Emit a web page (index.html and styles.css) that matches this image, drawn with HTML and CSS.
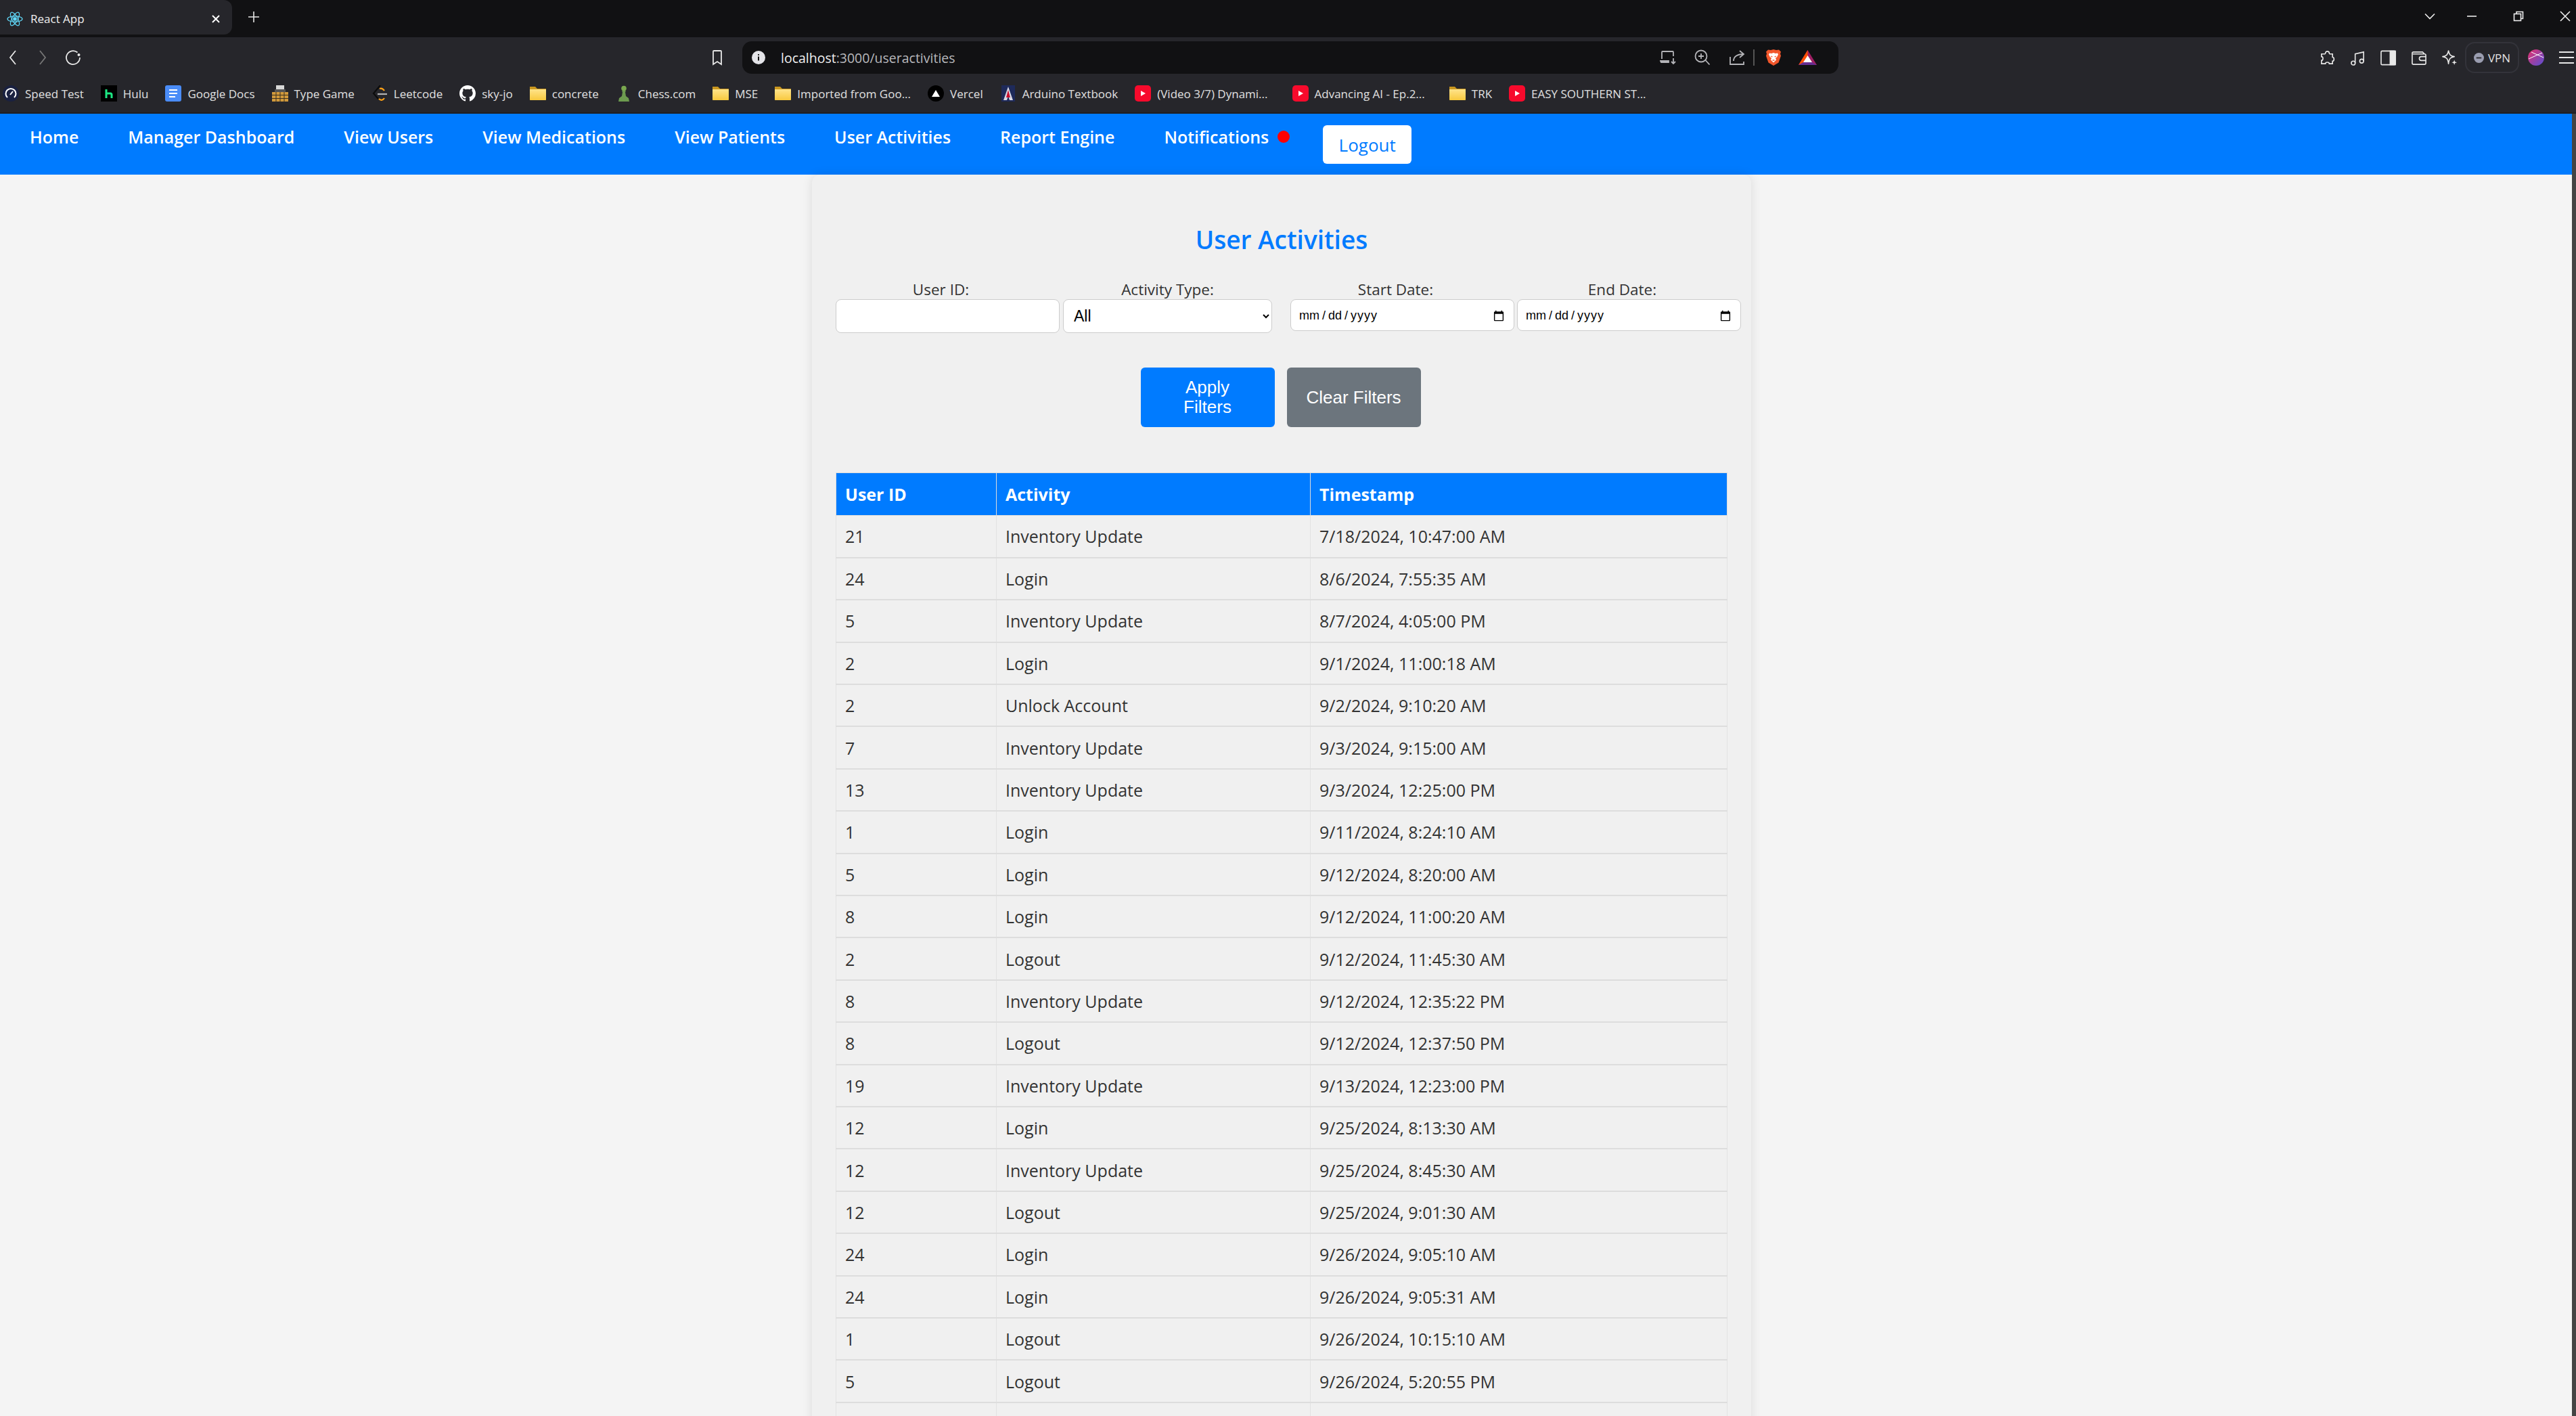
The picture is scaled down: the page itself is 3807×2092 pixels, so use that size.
FILE: index.html
```html
<!DOCTYPE html>
<html lang="en">
<head>
    <meta charset="UTF-8">
    <title>React App</title>
    <link rel="stylesheet" href="styles.css">
</head>
<body>
    <svg class="defs">
        <defs>
            <linearGradient id="fold" x1="0" y1="0" x2="0" y2="1"><stop offset="0" stop-color="#ffe38a"/><stop offset="1" stop-color="#f8c93e"/></linearGradient>
            <g id="folder-shape"><path d="M0 2h8l3 3h13v16a1 1 0 0 1-1 1H1a1 1 0 0 1-1-1z" fill="#c9971f"/><path d="M0 6h24v15a1 1 0 0 1-1 1H1a1 1 0 0 1-1-1z" fill="url(#fold)"/></g>
            <g id="yt-shape"><rect width="24" height="24" rx="5" fill="#f70a2c"/><path d="M9 8l7 4-7 4z" fill="#fff"/></g>
        </defs>
    </svg>

    <div class="tabstrip">
        <div class="tab">
            <svg class="ico" viewBox="0 0 24 24" fill="none" stroke="#61dafb" stroke-width="1.2"><circle cx="12" cy="12" r="2.200" fill="#61dafb"/><ellipse cx="12" cy="12" rx="11" ry="4.200"/><ellipse cx="12" cy="12" rx="11" ry="4.200" transform="rotate(60 12 12)"/><ellipse cx="12" cy="12" rx="11" ry="4.200" transform="rotate(120 12 12)"/></svg>
            <span class="tab-title">React App</span>
            <svg class="tab-x" viewBox="0 0 12 12" stroke="#fff" stroke-width="2"><path d="M1 1l10 10M11 1L1 11"/></svg>
        </div>
        <svg class="new-tab" viewBox="0 0 16 16" stroke="#e8e8e8" stroke-width="1.600"><path d="M8 0v16M0 8h16"/></svg>
        <div class="win-controls">
            <svg class="win-chev" viewBox="0 0 16 16" fill="none" stroke="#eee" stroke-width="1.600"><path d="M1 4.500l7 7 7-7"/></svg>
            <svg viewBox="0 0 16 16" stroke="#eee" stroke-width="1.600"><path d="M1 8h14"/></svg>
            <svg viewBox="0 0 16 16" fill="none" stroke="#eee" stroke-width="1.600"><rect x="1.500" y="4.500" width="10" height="10"/><path d="M5 4V1.500h9.500V11.500H12"/></svg>
            <svg viewBox="0 0 16 16" stroke="#eee" stroke-width="1.600"><path d="M1 1l14 14M15 1L1 15"/></svg>
        </div>
    </div>

    <div class="toolbar">
        <svg class="tool tool-back" viewBox="0 0 16 24" fill="none" stroke="#e8e8e8" stroke-width="1.800"><path d="M11 2L3 12l8 10"/></svg>
        <svg class="tool tool-fwd" viewBox="0 0 16 24" fill="none" stroke="#777" stroke-width="1.800"><path d="M5 2l8 10-8 10"/></svg>
        <svg class="tool tool-reload" viewBox="0 0 24 24" fill="none" stroke="#e8e8e8" stroke-width="1.800"><path d="M18.500 4.500A10 10 0 1 0 22 12"/><circle cx="20.500" cy="8" r="2" fill="#e8e8e8" stroke="none"/></svg>
        <svg class="tool tool-mark" viewBox="0 0 16 24" fill="none" stroke="#e8e8e8" stroke-width="1.800"><path d="M2 3a1 1 0 0 1 1-1h10a1 1 0 0 1 1 1v19l-6-4-6 4z"/></svg>
        <div class="urlbar">
            <svg class="info" viewBox="0 0 20 20"><circle cx="10" cy="10" r="10" fill="#e4e4e8"/><path d="M10 8.500v6M10 5v1.800" stroke="#111" stroke-width="2"/></svg>
            <span class="url"><span class="url-host">localhost</span>:3000/useractivities</span>
            <div class="url-tools">
                <svg viewBox="0 0 24 24" fill="none" stroke="#b4b4b8" stroke-width="1.800"><path d="M3 14V4a1 1 0 0 1 1-1h15a1 1 0 0 1 1 1v6M1 17h12v2H2z"/><path d="M20 13v8m-3-3l3 3 3-3"/></svg>
                <svg viewBox="0 0 24 24" fill="none" stroke="#b4b4b8" stroke-width="1.800"><circle cx="10" cy="10" r="8.500"/><path d="M16.500 16l6 6.500M10 6v8M6 10h8"/></svg>
                <svg viewBox="0 0 24 24" fill="none" stroke="#b4b4b8" stroke-width="1.800"><path d="M2 11v11h20v-4M7 17c0-6 5-10 14-10M16 2l6 5-6 5"/></svg>
            </div>
            <span class="url-sep"></span>
            <svg class="shield" viewBox="0 0 24 24"><path d="M12 0l4 1 4-.5 3 3-1 3 1 3-3.500 10L12 24l-7.500-4.500L1 9.500l1-3-1-3 3-3 4 .500z" fill="#f1562b"/><path d="M12 5l3 1 3-.5 1 2-2 4-2 1 1 3-4 4-4-4 1-3-2-1-2-4 1-2 3 .5z" fill="#fff"/><path d="M8 10l2.500 1M16 10l-2.500 1M10.500 16h3" stroke="#f1562b" stroke-width="1.300"/></svg>
            <svg class="triangle" viewBox="0 0 27 24"><path d="M13.500 1L27 23H0z" fill="#9e1f63"/><path d="M13.500 1v10L7 20 0 23z" fill="#ff5000"/><path d="M0 23l7-4h13l7 4z" fill="#662d91"/><path d="M13.500 9l6.500 10H7z" fill="#fff"/></svg>
        </div>
        <div class="ext-tools">
            <svg viewBox="0 0 24 24" fill="none" stroke="#e8e8e8" stroke-width="1.700"><path d="M9 5c0-4 6-4 6 0 0 1 0 1 1 1h4v5c3 0 3 6 0 6v4h-5c0-3-6-3-6 0H3v-5c3 0 3-6 0-6V6h5c1 0 1 0 1-1z"/></svg>
            <svg viewBox="0 0 24 24" fill="none" stroke="#e8e8e8" stroke-width="1.700"><circle cx="5" cy="20" r="3"/><circle cx="18" cy="17" r="3"/><path d="M8 20V6l13-3v14"/></svg>
            <svg viewBox="0 0 24 24" fill="none" stroke="#e8e8e8" stroke-width="1.700"><rect x="1" y="1.500" width="22" height="21" rx="1.500"/><rect x="15" y="1.500" width="8" height="21" fill="#e8e8e8"/></svg>
            <svg viewBox="0 0 24 24" fill="none" stroke="#e8e8e8" stroke-width="1.700"><path d="M2 5a2 2 0 0 1 2-2h14l3 3M2 5v15a2 2 0 0 0 2 2h17a2 2 0 0 0 2-2V8a2 2 0 0 0-2-2H3"/><path d="M23 10h-7a3 3 0 0 0 0 6h7"/></svg>
            <svg viewBox="0 0 24 24" fill="none" stroke="#e8e8e8" stroke-width="1.700"><path d="M11 1c1 6 3 8 9 9-6 1-8 3-9 11-1-8-3-10-9-11 6-1 8-3 9-9z" stroke-linejoin="round"/><path d="M20 15l1 3 3 1-3 1-1 3-1-3-3-1 3-1z" fill="#e8e8e8" stroke="none"/></svg>
        </div>
        <div class="vpn">
            <svg viewBox="0 0 16 16"><circle cx="8" cy="8" r="8" fill="#9a9db0"/><path d="M4 8h8" stroke="#2a2a2f" stroke-width="2"/></svg>
            <span>VPN</span>
        </div>
        <svg class="profile" viewBox="0 0 24 24"><defs><linearGradient id="pf" x1="0" y1="0" x2="1" y2="1"><stop offset="0" stop-color="#e8306a"/><stop offset="1" stop-color="#5550d8"/></linearGradient></defs><circle cx="12" cy="12" r="12" fill="url(#pf)"/><path d="M1 14L21 5M5 4l18 8" stroke="#fff" stroke-width="1" fill="none"/></svg>
        <svg class="menu" viewBox="0 0 22 20" stroke="#e8e8e8" stroke-width="2"><path d="M0 2h22M0 10h22M0 18h22"/></svg>
    </div>

    <div class="bookmarks">
        <span class="bm"><svg viewBox="0 0 24 24" fill="none"><circle cx="12" cy="12" r="12" fill="#1a2140"/><path d="M7 18a7.500 7.500 0 1 1 10 0" stroke="#fff" stroke-width="2"/><path d="M11 14l4-5" stroke="#fff" stroke-width="2"/></svg>Speed Test</span>
        <span class="bm"><svg viewBox="0 0 24 24"><rect width="24" height="24" fill="#000"/><path d="M8 6v13M8 12h6a2 2 0 0 1 2 2v5" stroke="#1ce783" stroke-width="3" fill="none"/></svg>Hulu</span>
        <span class="bm"><svg viewBox="0 0 24 24"><rect width="24" height="24" rx="3" fill="#4a8cf7"/><path d="M6 7h12M6 12h12M6 17h9" stroke="#fff" stroke-width="2.200"/></svg>Google Docs</span>
        <span class="bm"><svg viewBox="0 0 24 24"><rect x="6" width="12" height="10" fill="#d8d8d8"/><rect x="4" y="6" width="16" height="4" fill="#555"/><rect y="10" width="24" height="14" fill="#d29a3c"/><path d="M0 14.500h24M0 19.500h24M6 10v14M12 10v14M18 10v14" stroke="#3a3020"/></svg>Type Game</span>
        <span class="bm"><svg viewBox="0 0 24 24" fill="none" stroke-width="2.200"><path d="M13 0L3 12l7 8" stroke="#0c0c0c"/><path d="M11 20c3 3 6 2 8-1M12 5c3-1 5 0 7 3" stroke="#ffa116"/><path d="M9 13h14" stroke="#b3b3b3"/></svg>Leetcode</span>
        <span class="bm"><svg viewBox="0 0 16 16"><path fill="#fff" d="M8 0C3.580 0 0 3.580 0 8c0 3.540 2.290 6.530 5.470 7.590.4.070.55-.17.55-.38 0-.19-.01-.82-.01-1.490-2.010.37-2.530-.49-2.690-.94-.09-.23-.48-.94-.82-1.130-.28-.15-.68-.52-.01-.53.63-.01 1.080.58 1.230.82.72 1.210 1.870.87 2.330.66.07-.52.28-.87.51-1.070-1.780-.2-3.640-.89-3.640-3.950 0-.87.31-1.590.82-2.150-.08-.2-.36-1.020.08-2.120 0 0 .67-.21 2.200.82.64-.18 1.320-.27 2-.27.68 0 1.360.09 2 .27 1.530-1.040 2.200-.82 2.200-.82.44 1.100.16 1.920.08 2.120.51.56.82 1.270.82 2.150 0 3.070-1.870 3.750-3.650 3.950.29.25.54.73.54 1.480 0 1.070-.01 1.930-.01 2.200 0 .21.15.46.55.38A8.013 8.013 0 0016 8c0-4.420-3.580-8-8-8z"/></svg>sky-jo</span>
        <span class="bm"><svg viewBox="0 0 24 24"><use href="#folder-shape"/></svg>concrete</span>
        <span class="bm"><svg viewBox="0 0 24 24"><circle cx="12" cy="4.500" r="3.800" fill="#7aa84f"/><path d="M9 8h6l-1 2 1 6 4 3 1 5H4l1-5 4-3 1-6z" fill="#6d9b4f"/></svg>Chess.com</span>
        <span class="bm"><svg viewBox="0 0 24 24"><use href="#folder-shape"/></svg>MSE</span>
        <span class="bm"><svg viewBox="0 0 24 24"><use href="#folder-shape"/></svg>Imported from Goo...</span>
        <span class="bm"><svg viewBox="0 0 24 24"><circle cx="12" cy="12" r="12" fill="#000"/><path d="M12 7l6 10H6z" fill="#fff"/></svg>Vercel</span>
        <span class="bm"><svg viewBox="0 0 24 24"><rect x="2" width="20" height="24" fill="#1e2a5a"/><path d="M12 2l7 20h-5l-2-6-2 6H5z" fill="#d8d8e4"/><path d="M12 7l3 11H9z" fill="#c8102e"/></svg>Arduino Textbook</span>
        <span class="bm bm-trunc"><svg viewBox="0 0 24 24"><use href="#yt-shape"/></svg>(Video 3/7) Dynami...</span>
        <span class="bm bm-trunc"><svg viewBox="0 0 24 24"><use href="#yt-shape"/></svg>Advancing AI - Ep.2...</span>
        <span class="bm"><svg viewBox="0 0 24 24"><use href="#folder-shape"/></svg>TRK</span>
        <span class="bm"><svg viewBox="0 0 24 24"><use href="#yt-shape"/></svg>EASY SOUTHERN ST...</span>
    </div>

    <div class="viewport">
        <div class="content">
            <nav class="navbar">
                <a class="nav-link">Home</a>
                <a class="nav-link">Manager Dashboard</a>
                <a class="nav-link">View Users</a>
                <a class="nav-link">View Medications</a>
                <a class="nav-link">View Patients</a>
                <a class="nav-link">User Activities</a>
                <a class="nav-link">Report Engine</a>
                <a class="nav-link nav-notif">Notifications<span class="dot"></span></a>
                <button class="logout">Logout</button>
            </nav>

            <main class="page">
                <div class="card">
                    <h2 class="title">User Activities</h2>
                    <div class="filters">
                        <label class="field f-user"><span class="lbl">User ID:</span><input type="text"></label>
                        <label class="field f-type"><span>Activity Type:</span><select><option>All</option></select></label>
                        <label class="field f-date"><span class="lbl">Start Date:</span><input type="date"></label>
                        <label class="field f-date"><span class="lbl">End Date:</span><input type="date"></label>
                    </div>
                    <div class="actions">
                        <button class="btn btn-apply">Apply Filters</button>
                        <button class="btn btn-clear">Clear Filters</button>
                    </div>
                    <table class="log">
                        <thead>
                            <tr><th class="c-id">User ID</th><th class="c-act">Activity</th><th>Timestamp</th></tr>
                        </thead>
                        <tbody>
                            <tr><td>21</td><td>Inventory Update</td><td>7/18/2024, 10:47:00 AM</td></tr>
                            <tr><td>24</td><td>Login</td><td>8/6/2024, 7:55:35 AM</td></tr>
                            <tr><td>5</td><td>Inventory Update</td><td>8/7/2024, 4:05:00 PM</td></tr>
                            <tr><td>2</td><td>Login</td><td>9/1/2024, 11:00:18 AM</td></tr>
                            <tr><td>2</td><td>Unlock Account</td><td>9/2/2024, 9:10:20 AM</td></tr>
                            <tr><td>7</td><td>Inventory Update</td><td>9/3/2024, 9:15:00 AM</td></tr>
                            <tr><td>13</td><td>Inventory Update</td><td>9/3/2024, 12:25:00 PM</td></tr>
                            <tr><td>1</td><td>Login</td><td>9/11/2024, 8:24:10 AM</td></tr>
                            <tr><td>5</td><td>Login</td><td>9/12/2024, 8:20:00 AM</td></tr>
                            <tr><td>8</td><td>Login</td><td>9/12/2024, 11:00:20 AM</td></tr>
                            <tr><td>2</td><td>Logout</td><td>9/12/2024, 11:45:30 AM</td></tr>
                            <tr><td>8</td><td>Inventory Update</td><td>9/12/2024, 12:35:22 PM</td></tr>
                            <tr><td>8</td><td>Logout</td><td>9/12/2024, 12:37:50 PM</td></tr>
                            <tr><td>19</td><td>Inventory Update</td><td>9/13/2024, 12:23:00 PM</td></tr>
                            <tr><td>12</td><td>Login</td><td>9/25/2024, 8:13:30 AM</td></tr>
                            <tr><td>12</td><td>Inventory Update</td><td>9/25/2024, 8:45:30 AM</td></tr>
                            <tr><td>12</td><td>Logout</td><td>9/25/2024, 9:01:30 AM</td></tr>
                            <tr><td>24</td><td>Login</td><td>9/26/2024, 9:05:10 AM</td></tr>
                            <tr><td>24</td><td>Login</td><td>9/26/2024, 9:05:31 AM</td></tr>
                            <tr><td>1</td><td>Logout</td><td>9/26/2024, 10:15:10 AM</td></tr>
                            <tr><td>5</td><td>Logout</td><td>9/26/2024, 5:20:55 PM</td></tr>
                            <tr><td>&nbsp;</td><td></td><td></td></tr>
                        </tbody>
                    </table>
                </div>
            </main>
        </div>
        <div class="scrollbar"></div>
    </div>
</body>
</html>
```

FILE: styles.css
```css
body {
    margin: 0;
    height: 2092px;
    overflow: hidden;
    background-color: #f4f4f4;
    font-family: "Open Sans", "Noto Sans", sans-serif;
    color: #333;
}
.defs {
    position: absolute;
    width: 0;
    height: 0;
}

/* browser chrome */
.tabstrip {
    height: 55px;
    background: #111113;
    display: flex;
    align-items: flex-start;
    color: #f0f0f0;
}
.tab {
    width: 343px;
    height: 51px;
    background: #26262b;
    border-radius: 0 12px 12px 0;
    display: flex;
    align-items: center;
    padding: 4px 0 0 10px;
    box-sizing: border-box;
}
.ico {
    width: 24px;
    height: 24px;
    margin-right: 11px;
}
.tab-title {
    font-size: 17px;
    flex: 1;
}
.tab-x {
    width: 12px;
    height: 12px;
    margin-right: 18px;
}
.new-tab {
    width: 16px;
    height: 16px;
    margin: 17px 0 0 24px;
}
.win-controls {
    margin-left: auto;
    display: flex;
    align-items: center;
    height: 47px;
    gap: 53px;
    padding-right: 8px;
}
.win-controls svg {
    width: 16px;
    height: 16px;
}
.win-chev {
    margin-right: -7px;
}
.toolbar {
    height: 59px;
    background: #26262b;
    display: flex;
    align-items: center;
    padding-top: 1px;
    box-sizing: border-box;
}
.tool {
    flex: none;
    height: 24px;
}
.tool-back { width: 16px; margin-left: 12px; }
.tool-fwd { width: 16px; margin-left: 26px; }
.tool-reload { width: 24px; margin-left: 26px; }
.tool-mark { width: 16px; margin-left: 932px; }
.urlbar {
    width: 1620px;
    height: 48px;
    margin-left: 29px;
    background: #111113;
    border-radius: 14px;
    display: flex;
    align-items: center;
    padding-left: 14px;
    box-sizing: border-box;
}
.info {
    width: 20px;
    height: 20px;
}
.url {
    font-size: 19.5px;
    color: #b8b8bc;
    margin-left: 23px;
}
.url-host {
    color: #f0f0f0;
}
.url-tools {
    display: flex;
    gap: 27px;
    margin-left: auto;
}
.url-tools svg {
    width: 24px;
    height: 24px;
}
.url-sep {
    width: 2px;
    height: 24px;
    background: #555;
    margin: 0 16px 0 12px;
}
.shield {
    width: 24px;
    height: 26px;
}
.triangle {
    width: 27px;
    height: 24px;
    margin: 0 32px 0 25px;
}
.ext-tools {
    display: flex;
    gap: 22px;
    margin-left: auto;
}
.ext-tools svg {
    width: 23px;
    height: 23px;
}
.vpn {
    margin-left: 12px;
    width: 80px;
    height: 46px;
    border: 2px solid #33333a;
    border-radius: 14px;
    display: flex;
    align-items: center;
    justify-content: center;
    gap: 6px;
    font-size: 17px;
    color: #e0e0e0;
    box-sizing: border-box;
}
.vpn svg {
    width: 15px;
    height: 15px;
}
.profile {
    width: 24px;
    height: 24px;
    margin-left: 13px;
}
.menu {
    width: 22px;
    height: 20px;
    margin: 0 3px 0 22px;
}
.bookmarks {
    height: 54px;
    background: #26262b;
    border-bottom: 2px solid #1e1e22;
    box-sizing: border-box;
    display: flex;
    align-items: center;
    padding: 0 0 4px 4px;
    gap: 25px;
    font-size: 17px;
    color: #e0e0e0;
}
.bm {
    display: flex;
    align-items: center;
    gap: 9px;
    white-space: nowrap;
}
.bm-trunc {
    margin-right: 11px;
}
.bm svg {
    width: 24px;
    height: 24px;
    flex: none;
}

/* app */
.viewport {
    display: flex;
}
.content {
    flex: 1;
}
.scrollbar {
    width: 6px;
    height: 1924px;
    background: #444;
}
.navbar {
    height: 90px;
    background: #007bff;
    display: flex;
    align-items: flex-start;
    padding-left: 44px;
    box-sizing: border-box;
}
.nav-link {
    color: #fff;
    font-size: 25px;
    font-weight: 600;
    margin: 17px 73px 0 0;
    line-height: 34px;
    white-space: nowrap;
}
.nav-notif {
    margin-right: 49px;
    display: flex;
    align-items: center;
}
.dot {
    width: 18px;
    height: 18px;
    border-radius: 50%;
    background: #f00;
    margin-left: 13px;
}
.logout {
    width: 131px;
    height: 57px;
    margin-top: 17px;
    background: #fff;
    color: #007bff;
    border: none;
    border-radius: 6px;
    font: 26px "Open Sans", sans-serif;
}

.page {
    display: flex;
    justify-content: center;
    padding-right: 13px;
}
.card {
    width: 1388px;
    height: 1900px;
    background: #f0f0f0;
    border-radius: 12px;
    box-shadow: 0 0 15px rgba(0, 0, 0, 0.1);
    padding: 72px 35px 0;
    box-sizing: border-box;
}
.title {
    margin: 0;
    text-align: center;
    color: #007bff;
    font-size: 37px;
    font-weight: 600;
    line-height: 48px;
}
.filters {
    display: flex;
    margin: 37px -21px 0 0;
    gap: 5px;
    align-items: flex-start;
}
.field {
    display: flex;
    flex-direction: column;
    align-items: center;
    font-size: 22.5px;
    line-height: 26px;
    color: #333;
}
.lbl {
    margin-right: 20px;
}
.f-user, .f-date {
    width: 331px;
}
.f-type {
    width: 309px;
    margin-right: 22px;
}
.f-date + .f-date {
    margin-left: -1px;
}
.field input, .field select {
    width: 100%;
    box-sizing: border-box;
    border: 1px solid #ccc;
    border-radius: 8px;
    background: #fff;
    color: #000;
    padding: 0 11px;
    height: 50px;
    margin-top: 1px;
    font: 23px "Liberation Sans", sans-serif;
}
.field input[type="date"] {
    height: 47px;
    padding-top: 2px;
    font-size: 18px;
}
.field input::-webkit-datetime-edit-month-field {
    font-size: 13px;
}
.field input::-webkit-datetime-edit-year-field {
    letter-spacing: 1px;
}
.field input::-webkit-datetime-edit-text {
    margin: 0 3px;
}
.actions {
    display: flex;
    justify-content: center;
    gap: 18px;
    margin: 51px 0 0 -3px;
}
.btn {
    width: 198px;
    height: 88px;
    border: none;
    border-radius: 6px;
    color: #fff;
    font: 26px/29px "Liberation Sans", sans-serif;
    padding: 0 36px;
}
.btn-apply {
    background: #007bff;
}
.btn-clear {
    background: #6c757d;
    padding: 0 12px;
}
.log {
    width: 1318px;
    margin-top: 67px;
    border-collapse: collapse;
    table-layout: fixed;
    font-size: 25px;
}
.c-id {
    width: 237px;
}
.c-act {
    width: 464px;
}
.log th {
    background: #007bff;
    color: #fff;
    font-weight: 700;
    text-align: left;
    height: 63px;
    padding: 0 13px;
    border: 1px solid #ddd;
    box-sizing: border-box;
}
.log td {
    height: 62.4px;
    padding: 0 13px;
    border: 1px solid #e2e2e2;
    border-bottom: 2px solid #ddd;
    box-sizing: border-box;
    color: #333;
}
```
